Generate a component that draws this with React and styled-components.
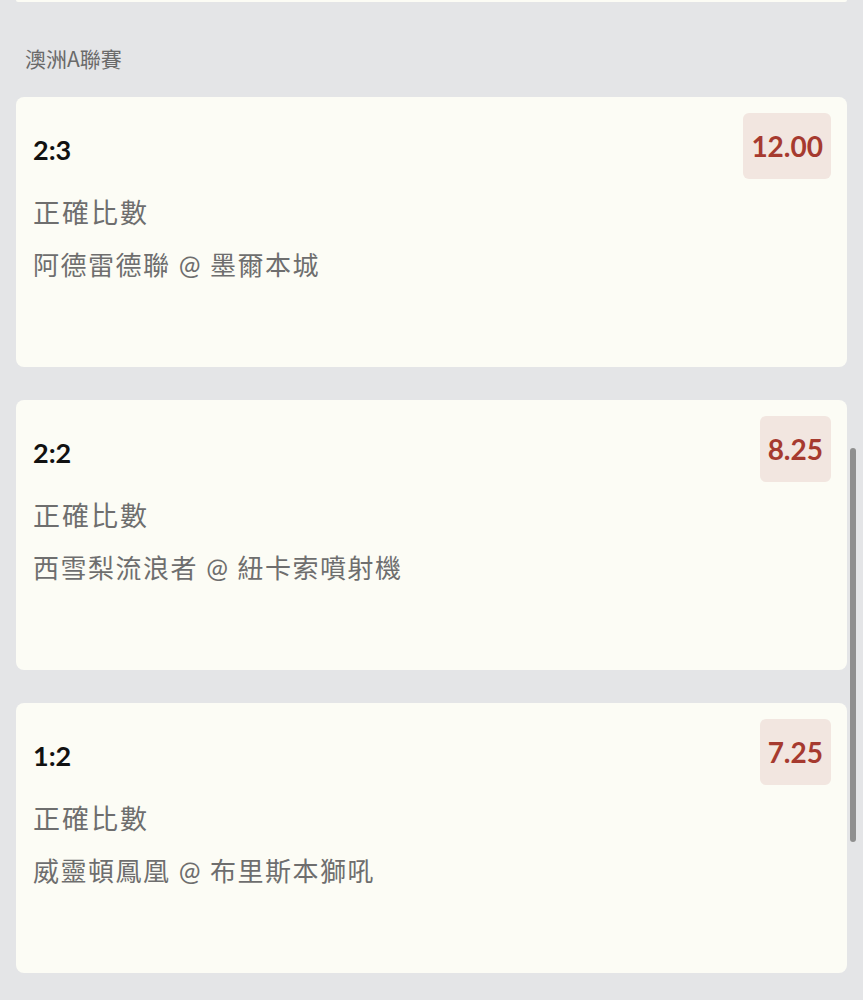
import React from "react";
import styled, { createGlobalStyle } from "styled-components";

const Global = createGlobalStyle`
  html, body { margin: 0; padding: 0; background: #e4e5e7; }
  body { font-family: Lato, "Noto Sans CJK TC", sans-serif; }
`;

const Page = styled.div`
  position: relative;
  min-height: 1000px;
  background: #e4e5e7;
  padding: 0 16px;
  box-sizing: border-box;
  overflow: hidden;
`;

const PrevCardEdge = styled.div`
  height: 2px;
  background: #fcfcf5;
  border-radius: 0 0 8px 8px;
`;

const SectionTitle = styled.div`
  padding: 42px 0 0 9px;
  height: 51px;
  box-sizing: border-box;
  font-size: 21px;
  line-height: 28px;
  color: #6a6a6a;
  font-family: "Noto Sans CJK TC", sans-serif;
`;

const List = styled.div`
  display: flex;
  flex-direction: column;
  gap: 33px;
  margin-top: 44px;
`;

const Card = styled.div`
  height: 270px;
  box-sizing: border-box;
  background: #fcfcf5;
  border-radius: 8px;
  padding: 16px 16px 0 17px;
  display: flex;
  flex-direction: column;
`;

const TopRow = styled.div`
  display: flex;
  align-items: center;
  justify-content: space-between;
`;

const Score = styled.div`
  font-family: Lato, sans-serif;
  font-weight: 700;
  font-size: 27px;
  color: #111;
  padding-top: 6px;
`;

const Odds = styled.div`
  height: 66px;
  box-sizing: border-box;
  padding: 0 8px;
  display: flex;
  align-items: center;
  background: #f2e6e0;
  border-radius: 6px;
  font-family: Lato, sans-serif;
  font-weight: 700;
  font-size: 28px;
  color: #a63a2f;
`;

const Lines = styled.div`
  margin-top: 7px;
`;

const Line = styled.div`
  font-family: Lato, "Noto Sans CJK TC", sans-serif;
  font-size: ${(p) => p.$size}px;
  line-height: 53px;
  letter-spacing: ${(p) => p.$spacing}px;
  color: #6e6e6e;
`;

const ScrollThumb = styled.div`
  position: absolute;
  right: 7px;
  top: 448px;
  width: 6px;
  height: 394px;
  border-radius: 3px;
  background: #8f8f8f;
`;

const bets = [
  { score: "2:3", odds: "12.00", market: "正確比數", match: "阿德雷德聯 @ 墨爾本城" },
  { score: "2:2", odds: "8.25", market: "正確比數", match: "西雪梨流浪者 @ 紐卡索噴射機" },
  { score: "1:2", odds: "7.25", market: "正確比數", match: "威靈頓鳳凰 @ 布里斯本獅吼" },
];

export default function App() {
  return (
    <>
      <Global />
      <Page>
        <PrevCardEdge />
        <SectionTitle>澳洲A聯賽</SectionTitle>
        <List>
          {bets.map((b) => (
            <Card key={b.score}>
              <TopRow>
                <Score>{b.score}</Score>
                <Odds>{b.odds}</Odds>
              </TopRow>
              <Lines>
                <Line $size={27} $spacing={2}>{b.market}</Line>
                <Line $size={26} $spacing={1.5}>{b.match}</Line>
              </Lines>
            </Card>
          ))}
        </List>
        <ScrollThumb />
      </Page>
    </>
  );
}
